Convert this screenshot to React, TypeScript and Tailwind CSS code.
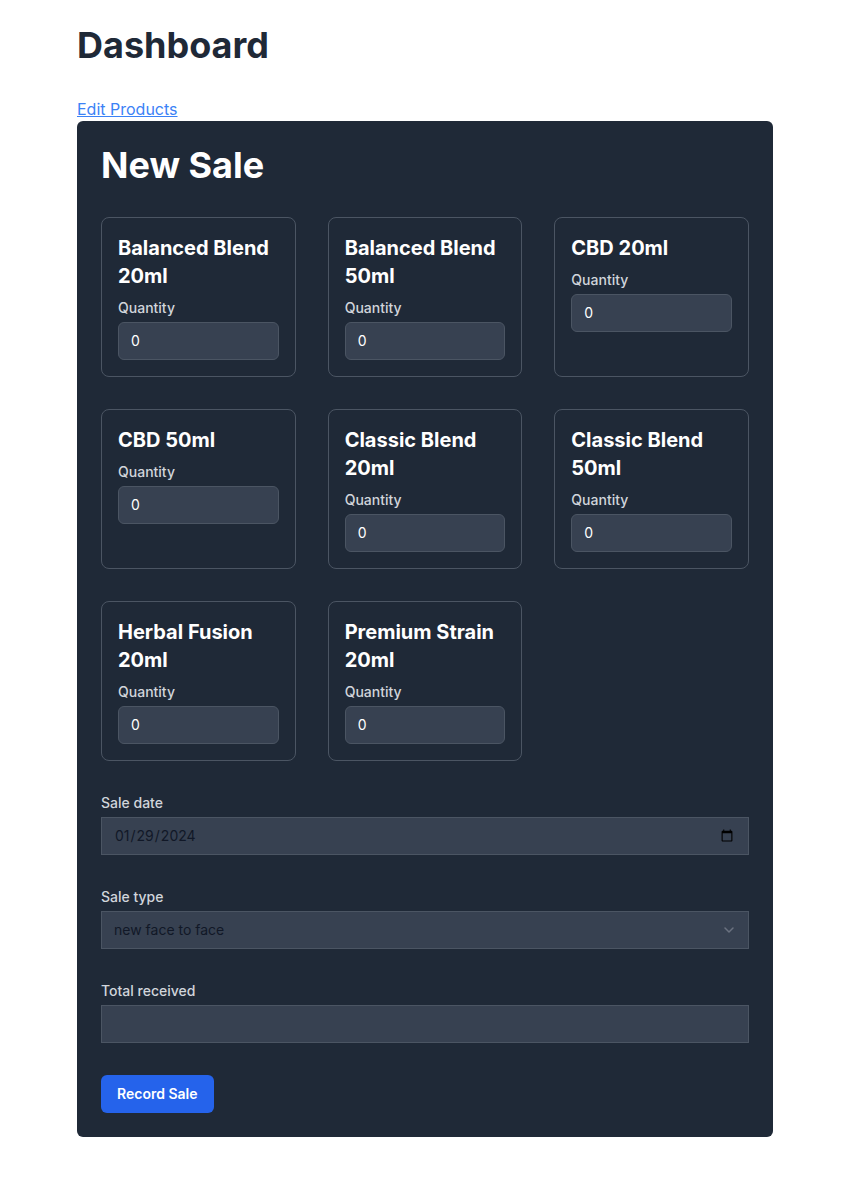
import React from "react";

const products = [
  "Balanced Blend 20ml",
  "Balanced Blend 50ml",
  "CBD 20ml",
  "CBD 50ml",
  "Classic Blend 20ml",
  "Classic Blend 50ml",
  "Herbal Fusion 20ml",
  "Premium Strain 20ml",
];

export default function App() {
  return (
    <div className="min-h-[1198px] bg-white font-['Inter','Liberation_Sans',sans-serif]">
      <div className="ml-[77px] w-[696px] pt-[25px]">
        <h1 className="text-4xl font-bold text-[#1f2937] mb-8">Dashboard</h1>
        <a href="#" className="block w-fit text-base text-[#3b82f6] underline">
          Edit Products
        </a>
        <div className="bg-[#1f2937] rounded-md p-6">
          <h2 className="text-4xl font-bold text-white mb-8">New Sale</h2>
          <div className="grid grid-cols-3 gap-8">
            {products.map((p) => (
              <div key={p} className="border border-[#4b5563] rounded-lg p-4">
                <h3 className="text-xl font-bold text-white">{p}</h3>
                <label className="block text-sm font-medium text-[#d1d5db] mt-2">Quantity</label>
                <input
                  type="number"
                  defaultValue={0}
                  className="mt-1 block w-full rounded-md border border-[#4b5563] bg-[#374151] px-3 py-2 text-sm text-white outline-none [appearance:textfield] [&::-webkit-inner-spin-button]:appearance-none"
                />
              </div>
            ))}
          </div>
          <div className="mt-8">
            <label className="block text-sm font-medium text-[#d1d5db]">Sale date</label>
            <input
              type="date"
              defaultValue="2024-01-29"
              className="mt-1 block w-full border border-[#4b5563] bg-[#374151] px-3 py-2 text-sm text-[#111827] outline-none"
            />
          </div>
          <div className="mt-8">
            <label className="block text-sm font-medium text-[#d1d5db]">Sale type</label>
            <div className="relative mt-1">
              <select
                defaultValue="new face to face"
                className="block w-full appearance-none border border-[#4b5563] bg-[#374151] px-3 py-2 text-sm text-[#111827] outline-none rounded-none"
              >
                <option>new face to face</option>
                <option>repeat</option>
              </select>
              <svg
                className="pointer-events-none absolute right-[10px] top-1/2 -translate-y-1/2"
                width="20"
                height="20"
                viewBox="0 0 20 20"
                fill="none"
              >
                <path d="M6 8l4 4 4-4" stroke="#6b7280" strokeWidth="1.5" strokeLinecap="round" strokeLinejoin="round" />
              </svg>
            </div>
          </div>
          <div className="mt-8">
            <label className="block text-sm font-medium text-[#d1d5db]">Total received</label>
            <input
              type="text"
              className="mt-1 block w-full h-[38px] border border-[#4b5563] bg-[#374151] px-3 py-2 text-sm text-white outline-none"
            />
          </div>
          <button className="mt-8 rounded-md bg-[#2563eb] px-4 py-[9px] text-sm font-semibold text-white">
            Record Sale
          </button>
        </div>
      </div>
    </div>
  );
}
